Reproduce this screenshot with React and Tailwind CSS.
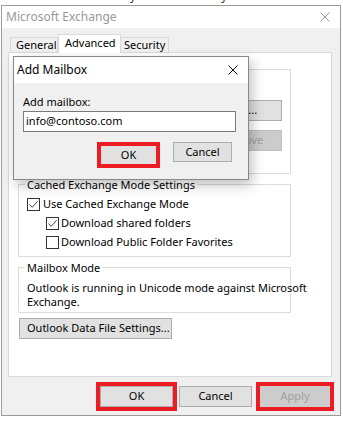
import React from 'react';

const font = { fontFamily: "'Segoe UI', 'Noto Sans', sans-serif" };

function Check({ checked }) {
  return (
    <span className="w-[13px] h-[13px] border border-[#333] bg-white flex items-center justify-center shrink-0">
      {checked && (
        <svg width="11" height="11" viewBox="0 0 11 11">
          <path d="M1.5 5.5 L4.2 8.3 L9.6 2.2" fill="none" stroke="#444" strokeWidth="1" />
        </svg>
      )}
    </span>
  );
}

function Btn({ children, w, disabled, className = '' }) {
  return (
    <div
      className={`h-[21px] flex items-center justify-center border whitespace-nowrap text-[11px] ${
        disabled ? 'bg-[#cccccc] border-[#bfbfbf] text-[#a0a0a0]' : 'bg-[#e1e1e1] border-[#adadad] text-black'
      } ${className}`}
      style={{ width: w }}
    >
      {children}
    </div>
  );
}

function Group({ label, className = '', children }) {
  return (
    <div className={`relative border border-[#dcdcdc] ${className}`}>
      {label && (
        <span className="absolute -top-[8px] left-[6px] bg-white px-[2px] leading-[15px] text-[11px] text-black whitespace-nowrap">{label}</span>
      )}
      {children}
    </div>
  );
}

function XIcon({ color, size = 10 }) {
  return (
    <svg width={size} height={size} viewBox="0 0 10 10">
      <path d="M0.5 0.5 L9.5 9.5 M9.5 0.5 L0.5 9.5" stroke={color} strokeWidth="1" />
    </svg>
  );
}

export default function App() {
  return (
    <div className="relative w-[343px] h-[421px] overflow-hidden bg-white" style={font}>
      <div className="h-[5px] overflow-hidden">
        <div className="-mt-[11px] whitespace-nowrap text-[12px] leading-[14px] text-[#3a3320]">
          or the server name for your account. If you don't know the server name, contact your
        </div>
      </div>

      <div className="ml-[1px] w-[340px] h-[411px] border border-[#9a9a9a] bg-[#f0f0f0] flex flex-col">
        <div className="h-[22px] bg-white flex items-center justify-between pl-[4px] pr-[10px]">
          <span className="text-[12px] text-[#999]">Microsoft Exchange</span>
          <XIcon color="#999" />
        </div>

        <div className="flex items-end h-[24px] pl-[8px] text-[11px] text-black">
          <div className="w-[48px] h-[15px] border border-b-0 border-[#d9d9d9] bg-[#f0f0f0] leading-[14px] pl-[5px]">General</div>
          <div className="w-[63px] h-[19px] -mb-px border border-b-0 border-[#d9d9d9] bg-white leading-[15px] pl-[6px] relative z-10">Advanced</div>
          <div className="w-[48px] h-[15px] border border-b-0 border-l-0 border-[#d9d9d9] bg-[#f0f0f0] leading-[14px] pl-[3px]">Security</div>
        </div>

        <div className="ml-[6px] w-[324px] h-[325px] border border-[#d9d9d9] bg-white pl-[9px] pt-[16px] flex flex-col">
          <Group className="w-[273px] h-[105px] shrink-0">
            <div className="flex flex-col items-end pt-[30px] pr-[8px] gap-[9px]">
              <Btn w={79}>Add...</Btn>
              <Btn w={79} disabled>Remove</Btn>
            </div>
          </Group>

          <Group label="Cached Exchange Mode Settings" className="w-[273px] h-[73px] mt-[10px] shrink-0">
            <div className="pt-[10px] pl-[8px] text-[11px] text-black">
              <div className="h-[19px] flex items-center gap-[3px]"><Check checked />Use Cached Exchange Mode</div>
              <div className="h-[19px] flex items-center gap-[2px] pl-[19px]"><Check checked />Download shared folders</div>
              <div className="h-[19px] flex items-center gap-[2px] pl-[19px]"><Check />Download Public Folder Favorites</div>
            </div>
          </Group>

          <Group label="Mailbox Mode" className="w-[273px] h-[46px] mt-[10px] shrink-0">
            <div className="pt-[13px] pl-[8px] text-[11px] leading-[14px] text-black whitespace-nowrap">
              Outlook is running in Unicode mode against Microsoft
              <br />
              Exchange.
            </div>
          </Group>

          <Btn w={153} className="mt-[5px] ml-[1px] shrink-0 !justify-start pl-[7px]">Outlook Data File Settings...</Btn>
        </div>

        <div className="flex items-center justify-end pr-[6px] mt-[5px]">
          <div className="border-[4px] border-[#ed1c24]">
            <Btn w={73}>OK</Btn>
          </div>
          <Btn w={73} className="ml-[2px]">Cancel</Btn>
          <div className="border-[4px] border-[#ed1c24] ml-[4px]">
            <Btn w={70} disabled className="!border-[#cccccc]">Apply</Btn>
          </div>
        </div>
      </div>

      <div className="absolute left-[13px] top-[56px] w-[236px] h-[124px] border border-[#888] bg-[#f0f0f0] shadow-[3px_5px_12px_rgba(0,0,0,0.25)] flex flex-col">
        <div className="h-[26px] bg-white flex items-center justify-between pl-[3px] pr-[10px]">
          <span className="text-[12px] text-black">Add Mailbox</span>
          <XIcon color="#111" />
        </div>
        <div className="pl-[9px] pt-[12px] text-[11px] text-black">
          <div className="leading-[14px]">Add mailbox:</div>
          <div className="mt-[2px] w-[213px] h-[21px] border border-[#7a7a7a] bg-white flex items-center pl-[2px]">info@contoso.com</div>
          <div className="flex items-start justify-end pr-[16px] mt-[10px]">
            <div className="border-[4px] border-[#ed1c24] w-[63px] h-[26px] bg-[#e1e1e1] flex items-center justify-center pt-[1px]">OK</div>
            <Btn w={59} className="ml-[13px] !h-[20px]">Cancel</Btn>
          </div>
        </div>
      </div>
    </div>
  );
}
